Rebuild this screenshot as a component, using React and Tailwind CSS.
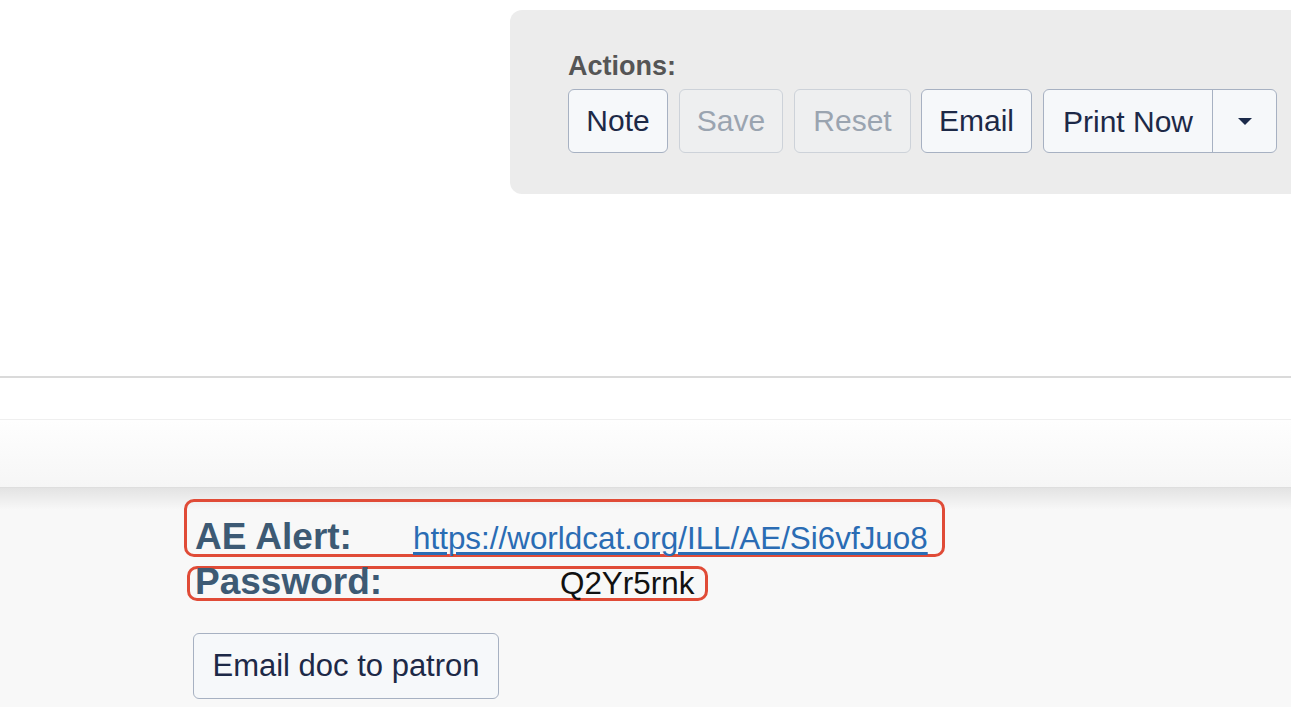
const font = { fontFamily: '"Liberation Sans", Arial, sans-serif' };

function ActionButton({ children, disabled, className = "" }) {
  return (
    <button
      disabled={disabled}
      className={
        "flex h-[64px] items-center justify-center rounded-[6px] border-[1.5px] text-[30px] leading-none " +
        (disabled
          ? "border-[#cdd2d9] bg-[#eeeff0] text-[#9aa4b0]"
          : "border-[#a7b1c2] bg-[#f6f8fa] text-[#1d2947]") +
        " " +
        className
      }
    >
      {children}
    </button>
  );
}

export default function App() {
  return (
    <div style={font} className="h-[707px] w-full overflow-hidden bg-white">
      {/* top area */}
      <div className="flex h-[376px] pt-[10px] pl-[510px]">
        <div className="h-[184px] w-[820px] shrink-0 rounded-[12px] bg-[#ececec] pt-[41px] pl-[58px]">
          <div className="text-[27px] font-bold leading-[30px] text-[#555555]">Actions:</div>
          <div className="mt-[8px] flex gap-[11px]">
            <ActionButton className="w-[100px]">Note</ActionButton>
            <ActionButton disabled className="w-[104px]">Save</ActionButton>
            <ActionButton disabled className="w-[117px]">Reset</ActionButton>
            <ActionButton className="w-[111px] -ml-[1px]">Email</ActionButton>
            <div className="flex h-[64px] w-[234px] overflow-hidden rounded-[6px] border-[1.5px] border-[#a7b1c2] bg-[#f6f8fa]">
              <span className="flex w-[169px] items-center justify-center border-r-[1.5px] border-[#a7b1c2] text-[30px] text-[#1d2947]">
                Print Now
              </span>
              <span className="flex flex-1 items-center justify-center">
                <svg width="16" height="9" viewBox="0 0 16 9">
                  <path d="M1 1h14L8 8z" fill="#1b2a4a" />
                </svg>
              </span>
            </div>
          </div>
        </div>
      </div>

      {/* dividers */}
      <div className="h-[2px] bg-[#dadada]" />
      <div className="h-[42px] border-b border-[#efefef] bg-white" />
      <div className="h-[67px] bg-gradient-to-b from-[#fefefe] to-[#f6f6f6]" />
      <div className="h-[1px] bg-[#dedede]" />

      {/* details */}
      <div className="h-[230px] bg-[linear-gradient(to_bottom,#e3e3e3,#f8f8f8_22px)] pt-[11px] pl-[184px]">
        <div className="box-border flex h-[58px] w-[761px] items-baseline rounded-[10px] border-[3px] border-[#e04b37] pt-[17px] pl-[8px]">
          <span className="w-[218px] shrink-0 text-[37px] font-bold leading-[36px] text-[#3d5a74]">AE Alert:</span>
          <a href="#" className="text-[31.4px] leading-[36px] text-[#2a6cb4] underline underline-offset-[3px]">
            https://worldcat.org/ILL/AE/Si6vfJuo8
          </a>
        </div>
        <div className="ml-[3px] mt-[9px] box-border flex h-[35px] w-[521px] items-baseline rounded-[10px] border-[3px] border-[#e04b37] pl-[5px]">
          <span className="w-[365px] shrink-0 text-[37px] font-bold leading-[25px] text-[#3d5a74]">Password:</span>
          <span className="text-[31.4px] leading-[25px] text-[#111111]">Q2Yr5rnk</span>
        </div>
        <button className="ml-[9px] mt-[32px] flex h-[66px] w-[306px] items-center justify-center rounded-[6px] border-[1.5px] border-[#a7b1c2] bg-[#f6f8fa] text-[31px] text-[#1d2947]">
          Email doc to patron
        </button>
      </div>
    </div>
  );
}
